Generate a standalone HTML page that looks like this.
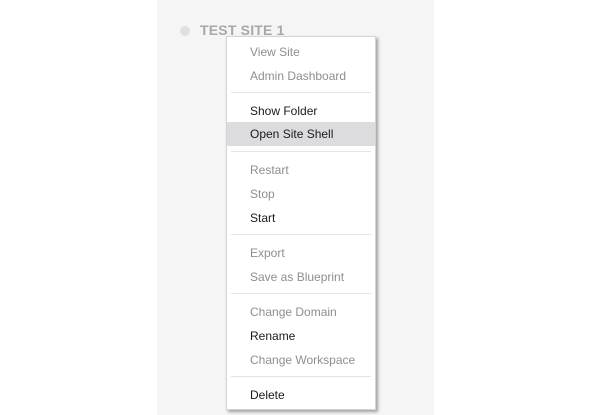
<!DOCTYPE html>
<html><head><style>
body{margin:0;width:600px;height:415px;background:#fff;position:relative;overflow:hidden;font-family:"Liberation Sans",sans-serif}
.panel{position:absolute;left:157px;top:0;width:277px;height:415px;background:#f5f5f5}
.dot{position:absolute;left:180px;top:26px;width:10px;height:10px;border-radius:50%;background:#e0e0e0}
.title{position:absolute;left:200px;top:22px;font-size:14px;font-weight:bold;color:#a8a8a8;letter-spacing:0.2px}
.menu{position:absolute;left:226px;top:36px;width:148px;height:372px;background:#fff;border:1px solid #d4d4d4;box-shadow:2px 2px 3px rgba(0,0,0,0.35)}
.it{position:absolute;left:0;width:148px;height:24px;line-height:24px;padding-left:23px;box-sizing:border-box;font-size:12px;color:#1a1a1a}
.g{color:#8e8e8e}
.hl{background:#dcdcdf}
.sep{position:absolute;left:4px;width:140px;height:1px;background:#e4e4e4}
</style></head><body>
<div class="panel"></div>
<div class="dot"></div>
<div class="title">TEST SITE 1</div>
<div class="menu">
<div class="it g" style="top:3px">View Site</div>
<div class="it g" style="top:27px">Admin Dashboard</div>
<div class="sep" style="top:55px"></div>
<div class="it" style="top:62px">Show Folder</div>
<div class="it hl" style="top:85px">Open Site Shell</div>
<div class="sep" style="top:114px"></div>
<div class="it g" style="top:121px">Restart</div>
<div class="it g" style="top:145px">Stop</div>
<div class="it" style="top:169px">Start</div>
<div class="sep" style="top:197px"></div>
<div class="it g" style="top:204px">Export</div>
<div class="it g" style="top:228px">Save as Blueprint</div>
<div class="sep" style="top:256px"></div>
<div class="it g" style="top:263px">Change Domain</div>
<div class="it" style="top:287px">Rename</div>
<div class="it g" style="top:311px">Change Workspace</div>
<div class="sep" style="top:339px"></div>
<div class="it" style="top:346px">Delete</div>
</div>
</body></html>
